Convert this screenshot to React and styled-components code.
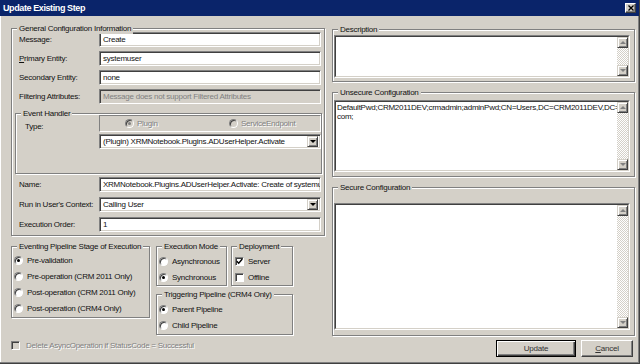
import styled, { createGlobalStyle } from 'styled-components';

const GlobalStyle = createGlobalStyle`
  html, body { margin: 0; padding: 0; background: #d4d0c8; }
  body {
    font-family: "Liberation Sans", Arial, sans-serif;
    font-size: 8px;
    letter-spacing: -0.25px;
    line-height: 11px;
    color: #111;
  }
  * { box-sizing: border-box; }
`;

const Window = styled.div`
  width: 640px;
  height: 364px;
  display: flex;
  flex-direction: column;
  background: #d4d0c8;
  border-right: 1px solid #404040;
  border-bottom: 1px solid #404040;
  box-shadow: inset -1px -1px #808080, inset 1px 0 #fff;
  overflow: hidden;
`;

const TitleBar = styled.div`
  height: 16px;
  flex: none;
  display: flex;
  align-items: center;
  justify-content: space-between;
  padding: 0 3px 0 3px;
  background: #0a246a;
  color: #fff;
  font-weight: bold;
  font-size: 9px;
  letter-spacing: -0.4px;
`;

const CloseButton = styled.div`
  width: 11px;
  height: 10px;
  display: flex;
  align-items: center;
  justify-content: center;
  background: #d4d0c8;
  border: 1px solid;
  border-color: #fff #404040 #404040 #fff;
  box-shadow: inset -1px -1px #808080;
`;

const Body = styled.div`
  flex: 1;
  display: flex;
  gap: 7px;
  padding: 12px 0 0 11px;
`;

const LeftCol = styled.div`
  width: 314px;
  display: flex;
  flex-direction: column;
`;

const RightCol = styled.div`
  width: 303px;
  display: flex;
  flex-direction: column;
`;

const Group = styled.div`
  position: relative;
  flex: none;
  width: ${p => (p.$w ? `${p.$w}px` : 'auto')};
  height: ${p => p.$h}px;
  margin-top: ${p => p.$mt || 0}px;
  padding: ${p => p.$pad || '0'};
  border: 1px solid #808080;
  box-shadow: inset 1px 1px #fff, 1px 1px #fff;
`;

const Legend = styled.span`
  position: absolute;
  top: -6px;
  left: 5px;
  padding: 0 2px;
  background: #d4d0c8;
  white-space: nowrap;
`;

const FieldGrid = styled.div`
  display: grid;
  grid-template-columns: ${p => p.$label}px 222px;
  row-gap: ${p => p.$gap}px;
  align-items: center;
  padding-left: ${p => p.$indent}px;
  margin-top: ${p => p.$mt || 0}px;
`;

const Label = styled.span`
  white-space: nowrap;
  align-self: ${p => (p.$top ? 'start' : 'center')};
  padding-top: ${p => (p.$top ? 6 : 0)}px;
`;

const TextBox = styled.div`
  height: 15px;
  display: flex;
  align-items: center;
  padding: 0 2px 0 3px;
  background: ${p => (p.$disabled ? '#d4d0c8' : '#fff')};
  color: ${p => (p.$disabled ? '#808080' : '#111')};
  border: 1px solid;
  border-color: #808080 #fff #fff #808080;
  box-shadow: inset 1px 1px #404040, inset -1px -1px #d4d0c8;
  white-space: nowrap;
  overflow: hidden;
`;

const Combo = styled(TextBox)`
  padding-right: 2px;
`;

const ComboValue = styled.span`
  flex: 1;
  overflow: hidden;
`;

const ArrowButton = styled.span`
  width: 11px;
  height: 11px;
  flex: none;
  display: flex;
  align-items: center;
  justify-content: center;
  background: #d4d0c8;
  border: 1px solid;
  border-color: #d4d0c8 #404040 #404040 #d4d0c8;
  box-shadow: inset 1px 1px #fff, inset -1px -1px #808080;
`;

const Arrow = styled.span`
  width: 0;
  height: 0;
  border-left: 3px solid transparent;
  border-right: 3px solid transparent;
  ${p => (p.$up ? 'border-bottom' : 'border-top')}: 3px solid ${p => p.$color || '#000'};
`;

const TypeStack = styled.div`
  display: flex;
  flex-direction: column;
  gap: 2px;
`;

const TypeBox = styled.div`
  height: 17px;
  display: flex;
  align-items: center;
  padding-left: 25px;
  border: 1px solid;
  border-color: #808080 #fff #fff #808080;
`;

const TypeOption = styled.div`
  width: ${p => p.$w || 'auto'};
  display: flex;
  align-items: center;
  gap: 3px;
`;

const DisabledText = styled.span`
  color: #808080;
  text-shadow: 1px 1px 0 #fff;
  white-space: nowrap;
`;

const Radio = styled.span`
  width: 9px;
  height: 9px;
  flex: none;
  border-radius: 50%;
  display: flex;
  align-items: center;
  justify-content: center;
  background: ${p => (p.$disabled ? '#d4d0c8' : '#fff')};
  border: 1px solid;
  border-color: #808080 #fff #fff #808080;
  box-shadow: inset 1px 1px #404040;
  &::after {
    content: '';
    display: ${p => (p.$checked ? 'block' : 'none')};
    width: 3px;
    height: 3px;
    border-radius: 50%;
    background: ${p => (p.$disabled ? '#808080' : '#000')};
  }
`;

const Check = styled.span`
  width: 9px;
  height: 9px;
  flex: none;
  display: flex;
  align-items: center;
  justify-content: center;
  background: ${p => (p.$disabled ? '#d4d0c8' : '#fff')};
  border: 1px solid;
  border-color: #808080 #fff #fff #808080;
  box-shadow: inset 1px 1px #404040;
`;

const OptionList = styled.div`
  display: flex;
  flex-direction: column;
`;

const Option = styled.div`
  height: 16px;
  display: flex;
  align-items: center;
  gap: 4px;
  white-space: nowrap;
`;

const BottomRow = styled.div`
  display: flex;
  align-items: flex-start;
  margin-top: 10px;
`;

const MiddleCol = styled.div`
  width: 137px;
  margin-left: 6px;
  display: flex;
  flex-direction: column;
`;

const Pair = styled.div`
  display: flex;
  gap: 4px;
`;

const DeleteRow = styled.div`
  height: 12px;
  margin-top: 4px;
  display: flex;
  align-items: center;
  gap: 6px;
`;

const TextFrame = styled.div`
  height: ${p => p.$h}px;
  border: 1px solid;
  border-color: #808080 #fff #fff #808080;
`;

const TextInner = styled.div`
  height: 100%;
  display: flex;
  background: #fff;
  border: 1px solid;
  border-color: #404040 #d4d0c8 #d4d0c8 #404040;
`;

const TextContent = styled.div`
  flex: 1;
  padding: 1px 2px 0 1px;
  line-height: 9px;
  white-space: pre;
  overflow: hidden;
`;

const ScrollBar = styled.div`
  width: 11px;
  flex: none;
  display: flex;
  flex-direction: column;
`;

const ScrollTrack = styled.div`
  flex: 1;
  background: repeating-conic-gradient(#d4d0c8 0 25%, #fff 0 50%) 0 0 / 2px 2px;
`;

const ButtonRow = styled.div`
  display: flex;
  justify-content: flex-end;
  gap: 5px;
  margin-top: 4px;
  padding-right: 2px;
`;

const Button = styled.div`
  width: ${p => p.$w}px;
  height: 17px;
  display: flex;
  align-items: center;
  justify-content: center;
  color: #333;
  background: #d4d0c8;
  border: 1px solid;
  border-color: ${p => (p.$default ? '#000' : '#fff #404040 #404040 #fff')};
  box-shadow: ${p =>
    p.$default
      ? 'inset 1px 1px #fff, inset -1px -1px #404040, inset -2px -2px #808080'
      : 'inset -1px -1px #808080'};
`;

function Scroll() {
  return (
    <ScrollBar>
      <ArrowButton><Arrow $up $color="#808080" /></ArrowButton>
      <ScrollTrack />
      <ArrowButton><Arrow $color="#808080" /></ArrowButton>
    </ScrollBar>
  );
}

function TextArea({ h, children }) {
  return (
    <TextFrame $h={h}>
      <TextInner>
        <TextContent>{children}</TextContent>
        <Scroll />
      </TextInner>
    </TextFrame>
  );
}

function Dropdown({ children }) {
  return (
    <Combo>
      <ComboValue>{children}</ComboValue>
      <ArrowButton><Arrow /></ArrowButton>
    </Combo>
  );
}

function CheckMark() {
  return (
    <svg width="7" height="7" viewBox="0 0 7 7">
      <path d="M0.8 3.2 L2.7 5.2 L6.3 1" fill="none" stroke="#000" strokeWidth="1.4" />
    </svg>
  );
}

export default function App() {
  return (
    <>
      <GlobalStyle />
      <Window>
        <TitleBar>
          <span>Update Existing Step</span>
          <CloseButton>
            <svg width="6" height="6" viewBox="0 0 6 6">
              <path d="M0.5 0.5 L5.5 5.5 M5.5 0.5 L0.5 5.5" stroke="#000" strokeWidth="1.3" />
            </svg>
          </CloseButton>
        </TitleBar>
        <Body>
          <LeftCol>
            <Group $h={208} $pad="3px 3px 0 3px">
              <Legend>General Configuration Information</Legend>
              <FieldGrid $label={80} $gap={4} $indent={4}>
                <Label>Message:</Label>
                <TextBox>Create</TextBox>
                <Label><u>P</u>rimary Entity:</Label>
                <TextBox>systemuser</TextBox>
                <Label>Secondary Entity:</Label>
                <TextBox>none</TextBox>
                <Label>Filtering Attributes:</Label>
                <TextBox $disabled>Message does not support Filtered Attributes</TextBox>
              </FieldGrid>
              <Group $w={307} $h={61} $mt={9} $pad="1px 0 0 9px">
                <Legend>Event Handler</Legend>
                <FieldGrid $label={74} $gap={0} $indent={0}>
                  <Label $top>Type:</Label>
                  <TypeStack>
                    <TypeBox>
                      <TypeOption $w="104px">
                        <Radio $checked $disabled />
                        <DisabledText>Plugin</DisabledText>
                      </TypeOption>
                      <TypeOption>
                        <Radio $disabled />
                        <DisabledText>ServiceEndpoint</DisabledText>
                      </TypeOption>
                    </TypeBox>
                    <Dropdown>(Plugin) XRMNotebook.Plugins.ADUserHelper.Activate</Dropdown>
                  </TypeStack>
                </FieldGrid>
              </Group>
              <FieldGrid $label={80} $gap={5} $indent={4} $mt={3}>
                <Label>Name:</Label>
                <TextBox>XRMNotebook.Plugins.ADUserHelper.Activate: Create of systemuser</TextBox>
                <Label>Run in User's Context:</Label>
                <Dropdown>Calling User</Dropdown>
                <Label>Execution Order:</Label>
                <TextBox>1</TextBox>
              </FieldGrid>
            </Group>

            <BottomRow>
              <Group $w={139} $h={72} $pad="5px 0 0 2px">
                <Legend>Eventing Pipeline Stage of Execution</Legend>
                <OptionList>
                  <Option><Radio $checked />Pre-validation</Option>
                  <Option><Radio />Pre-operation (CRM 2011 Only)</Option>
                  <Option><Radio />Post-operation (CRM 2011 Only)</Option>
                  <Option><Radio />Post-operation (CRM4 Only)</Option>
                </OptionList>
              </Group>
              <MiddleCol>
                <Pair>
                  <Group $w={71} $h={40} $pad="6px 0 0 2px">
                    <Legend>Execution Mode</Legend>
                    <OptionList>
                      <Option><Radio />Asynchronous</Option>
                      <Option><Radio $checked />Synchronous</Option>
                    </OptionList>
                  </Group>
                  <Group $w={62} $h={40} $pad="6px 0 0 3px">
                    <Legend>Deployment</Legend>
                    <OptionList>
                      <Option><Check><CheckMark /></Check>Server</Option>
                      <Option><Check />Offline</Option>
                    </OptionList>
                  </Group>
                </Pair>
                <Group $w={137} $h={41} $mt={8} $pad="6px 0 0 2px">
                  <Legend>Triggering Pipeline (CRM4 Only)</Legend>
                  <OptionList>
                    <Option><Radio $checked />Parent Pipeline</Option>
                    <Option><Radio />Child Pipeline</Option>
                  </OptionList>
                </Group>
              </MiddleCol>
            </BottomRow>

            <DeleteRow>
              <Check $disabled />
              <DisabledText>Delete AsyncOperation if StatusCode = Successful</DisabledText>
            </DeleteRow>
          </LeftCol>

          <RightCol>
            <Group $h={53} $mt={1} $pad="5px 4px 0 1px">
              <Legend>Description</Legend>
              <TextArea h={43} />
            </Group>
            <Group $h={85} $mt={10} $pad="7px 4px 0 1px">
              <Legend>Unsecure Configuration</Legend>
              <TextArea h={72}>
                {'DefaultPwd;CRM2011DEV;crmadmin;adminPwd;CN=Users,DC=CRM2011DEV,DC=\ncom;'}
              </TextArea>
            </Group>
            <Group $h={149} $mt={10} $pad="15px 4px 0 1px">
              <Legend>Secure Configuration</Legend>
              <TextArea h={127} />
            </Group>
            <ButtonRow>
              <Button $w={80} $default>Update</Button>
              <Button $w={52}><span><u>C</u>ancel</span></Button>
            </ButtonRow>
          </RightCol>
        </Body>
      </Window>
    </>
  );
}
